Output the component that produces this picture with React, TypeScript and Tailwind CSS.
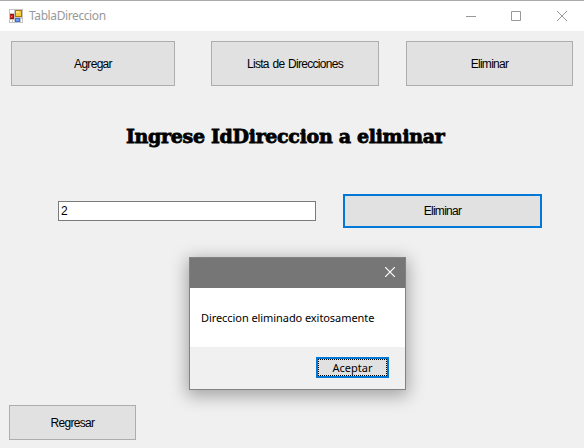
import type { ReactNode } from "react";

const sans =
  "font-['Liberation_Sans',Arial,sans-serif] text-[12px] leading-[14px] tracking-[-0.7px] [word-spacing:1px]";
const segoe = "font-['Noto_Sans',sans-serif]";

function WinButton({ className, children }: { className: string; children: ReactNode }) {
  return (
    <button
      className={`flex items-center justify-center bg-[#e1e1e1] text-black whitespace-nowrap ${sans} ${className}`}
    >
      {children}
    </button>
  );
}

function FormIcon() {
  return (
    <svg width="14" height="14" viewBox="0 0 14 14" shapeRendering="crispEdges">
      <rect width="14" height="14" fill="#c4c4c4" />
      <rect x="1" y="1" width="4" height="3" fill="#fff" />
      <rect x="1" y="11" width="2" height="2" fill="#fff" />
      <rect x="4" y="11" width="1" height="2" fill="#fff" />
      <rect x="12" y="10" width="1" height="3" fill="#fff" />
      <rect x="1" y="5" width="4" height="5" fill="#9b1212" />
      <rect x="1" y="6" width="3" height="3" fill="#c92a20" />
      <rect x="2" y="7" width="1" height="1" fill="#f08a78" />
      <rect x="6" y="1" width="7" height="7" fill="#ab7900" />
      <rect x="7" y="2" width="5" height="5" fill="#f8cb3c" />
      <rect x="7" y="2" width="3" height="2" fill="#ffe58a" />
      <rect x="6" y="9" width="5" height="4" fill="#3c6fd0" />
      <rect x="7" y="10" width="3" height="2" fill="#6ea2f6" />
    </svg>
  );
}

function TitleBar() {
  return (
    <header className="flex h-[31px] items-center justify-between border-t border-[#a9a9a9] bg-white pl-[9px] pr-[17px]">
      <div className="flex items-center gap-[6px]">
        <FormIcon />
        <span className={`${segoe} text-[12px] leading-4 tracking-[-0.4px] text-[#999999]`}>
          TablaDireccion
        </span>
      </div>
      <svg width="101" height="10" viewBox="0 0 101 10" fill="none" stroke="#999999">
        <path d="M0 5.5H10" />
        <path d="M45.5 .5H54.5V9.5H45.5Z" />
        <path d="M91 0L101 10M101 0L91 10" />
      </svg>
    </header>
  );
}

function MessageDialog() {
  return (
    <section
      role="dialog"
      className={`absolute left-[189px] top-[257px] flex h-[133px] w-[217px] flex-col border border-[#828282] bg-white shadow-[0_4px_16px_2px_rgba(0,0,0,0.32)] ${segoe} text-[11px] leading-[14px] text-black`}
    >
      <div className="flex h-[30px] shrink-0 items-center justify-end bg-[#767676] pb-[2px] pr-[10px]">
        <svg width="10" height="10" viewBox="0 0 10 10" fill="none" stroke="#fff" strokeWidth="1.2">
          <path d="M0 0L10 10M10 0L0 10" />
        </svg>
      </div>
      <div className="flex flex-1 items-center pl-[11px]">
        <span className="whitespace-nowrap tracking-[-0.07px]">Direccion eliminado exitosamente</span>
      </div>
      <div className="flex h-[42px] shrink-0 items-center justify-end bg-[#f0f0f0] pb-[2px] pr-[16px]">
        <button className="h-[21px] w-[73px] border-2 border-[#0078d7] bg-[#e1e1e1]">
          <span className="flex h-full items-center justify-center border border-dotted border-black pt-px">
            Aceptar
          </span>
        </button>
      </div>
    </section>
  );
}

export default function App() {
  return (
    <main className="relative flex h-[448px] w-[584px] flex-col overflow-hidden bg-[#f0f0f0]">
      <TitleBar />
      <nav className="flex pl-[11px] pt-[10px]">
        <WinButton className="h-[45px] w-[164px] border border-[#adadad]">Agregar</WinButton>
        <WinButton className="ml-[36px] h-[45px] w-[168px] border border-[#adadad]">
          Lista de Direcciones
        </WinButton>
        <WinButton className="ml-[27px] h-[45px] w-[167px] border border-[#adadad]">Eliminar</WinButton>
      </nav>
      <h1 className="mt-[38px] h-[24px] pl-[126px] font-['DejaVu_Serif',serif] text-[19px] font-bold leading-[24px] tracking-[-0.31px] whitespace-nowrap text-black [-webkit-text-stroke:0.8px_black]">
        Ingrese IdDireccion a eliminar
      </h1>
      <div className="mt-[46px] flex items-center pl-[58px]">
        <input
          className={`h-[20px] w-[258px] border border-[#7a7a7a] bg-white px-[2px] text-black outline-none ${sans}`}
          defaultValue="2"
        />
        <WinButton className="ml-[27px] h-[34px] w-[199px] border-2 border-[#0078d7]">Eliminar</WinButton>
      </div>
      <footer className="mt-auto pb-[8px] pl-[9px]">
        <WinButton className="h-[35px] w-[127px] border border-[#adadad]">Regresar</WinButton>
      </footer>
      <MessageDialog />
    </main>
  );
}
